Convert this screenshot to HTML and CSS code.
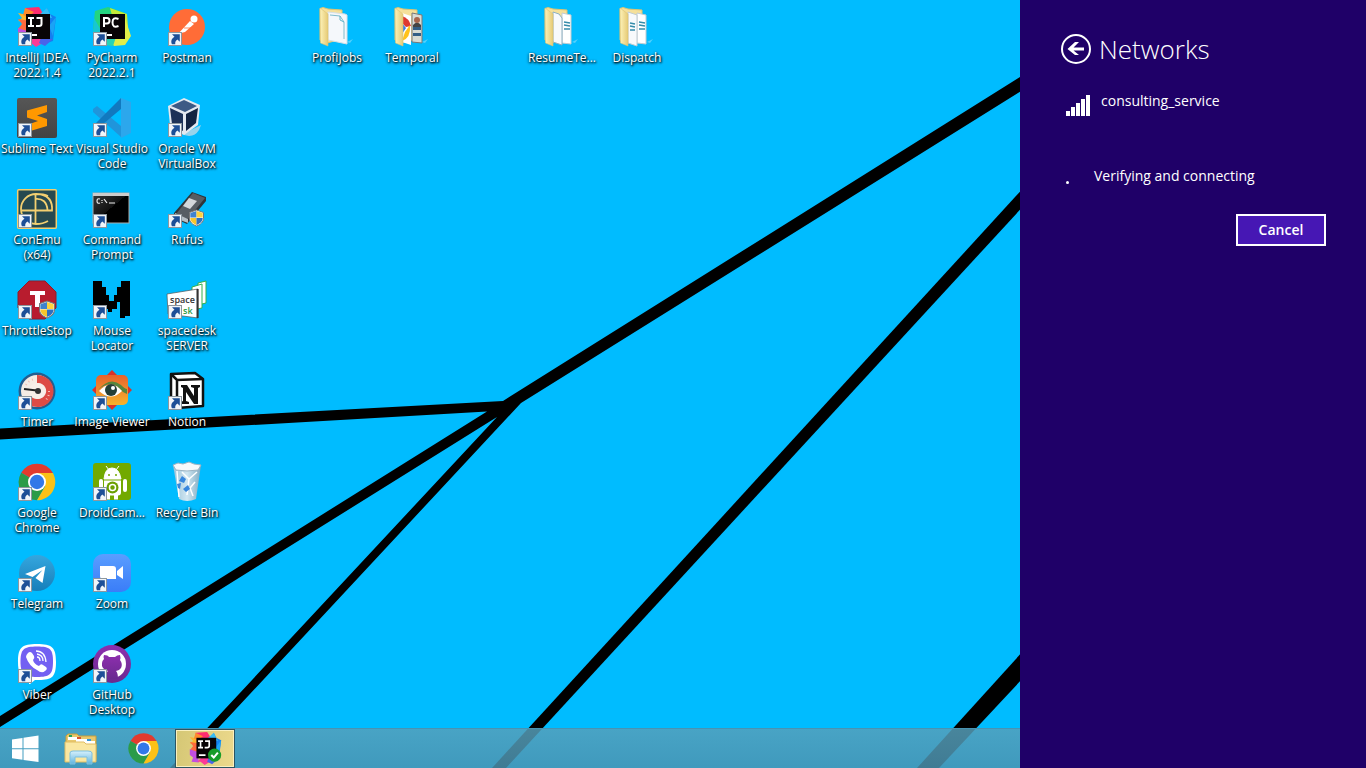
FILE: index.html
```html
<!DOCTYPE html>
<html lang="en">
<head>
<meta charset="utf-8">
<title>Desktop</title>
<link rel="stylesheet" href="styles.css">
</head>
<body>
<svg class="defs" aria-hidden="true">
  <defs>
    <linearGradient id="g-folder" x1="0" x2="1"><stop offset="0" stop-color="#fdf2b8"/><stop offset="1" stop-color="#e6ca75"/></linearGradient>
    <linearGradient id="g-tg" x1="0" y1="0" x2="0" y2="1"><stop offset="0" stop-color="#35a6de"/><stop offset="1" stop-color="#167fba"/></linearGradient>
    <linearGradient id="g-zoom" x1="0" y1="0" x2="0" y2="1"><stop offset="0" stop-color="#5a9dff"/><stop offset="1" stop-color="#3a7df8"/></linearGradient>
    <linearGradient id="g-gh" x1="0" y1="0" x2="0" y2="1"><stop offset="0" stop-color="#8d2fae"/><stop offset="1" stop-color="#6a2a90"/></linearGradient>
    <linearGradient id="g-eye" x1="0" y1="0" x2="0" y2="1"><stop offset="0" stop-color="#e8622c"/><stop offset="1" stop-color="#f6b32c"/></linearGradient>
    <linearGradient id="g-cmd" x1="0" y1="0" x2="1" y2="1"><stop offset="0" stop-color="#3a3a3a"/><stop offset=".5" stop-color="#111"/><stop offset=".5" stop-color="#000"/></linearGradient>
    <linearGradient id="g-sub" x1="0" y1="0" x2="0" y2="1"><stop offset="0" stop-color="#565656"/><stop offset="1" stop-color="#434343"/></linearGradient>
    <linearGradient id="g-bin" x1="0" x2="1"><stop offset="0" stop-color="#a3c3d6"/><stop offset=".5" stop-color="#dce9f1"/><stop offset="1" stop-color="#86a9be"/></linearGradient>
    <linearGradient id="g-stand" x1="0" y1="0" x2="0" y2="1"><stop offset="0" stop-color="#d6f0fc"/><stop offset="1" stop-color="#5fb4de"/></linearGradient>

    <symbol id="shortcut" viewBox="0 0 14 14">
      <rect x=".5" y=".5" width="13" height="13" fill="#f1f5f9" stroke="#8d979f"/>
      <path d="M4 2.200h7.800v7.600l-2.400-2.300C7.600 8.600 7 10 7.300 12.300H4C2.500 9 3.600 6.400 6.500 4.700z" fill="#1d4f97"/>
    </symbol>
    <symbol id="shield" viewBox="0 0 15 17">
      <path d="M7.500.5 14.500 3v6c0 3.500-3 6-7 7.500C3.500 15 .5 12.500.5 9V3z" fill="#fff" stroke="#777"/>
      <path d="M7.500 1.500V8H1.300V3.500z" fill="#3f83cf"/><path d="M7.500 1.500V8h6.200V3.500z" fill="#ffd23c"/>
      <path d="M1.300 8.500h6.200v7C4 14 1.300 12 1.300 8.500z" fill="#f7c52b"/><path d="M13.700 8.500H7.500v7c3.500-1.500 6.200-3.500 6.200-7z" fill="#2e70bf"/>
    </symbol>
    <symbol id="chrome" viewBox="0 0 40 40">
      <path d="M20 20 4.200 10.800A18.300 18.300 0 0 1 35.900 10.800z" fill="#e33b2e"/>
      <path d="M20 20 4.200 10.800A18.300 18.300 0 0 0 20 38.300l8-13.700z" fill="#2b9b48"/>
      <path d="M20 11H35.900A18.300 18.300 0 0 1 20 38.300L28 24.500z" fill="#fbc116"/>
      <circle cx="20" cy="20" r="9" fill="#fff"/><circle cx="20" cy="20" r="7.200" fill="#3278e8"/>
    </symbol>
    <symbol id="idea" viewBox="0 0 40 40">
      <path d="m1 6 9 2 3 8-12-2 4-3z" fill="#fdb52d"/><path d="m1 12 12 2-3 12-9-4 4-5z" fill="#ff6a3c"/>
      <path d="m8 1 14-1 5 8-4 8-14-6z" fill="#ff2d6e"/><path d="m8 1-2 7 5 2 6-5z" fill="#ff8a2b"/>
      <path d="m1 21 9 3 2 13-9-1 2-5-4-3z" fill="#c14fe0"/>
      <path d="m30 1 3 6 6 3-3 24-9 3-3-22z" fill="#147ff0"/><path d="m30 1-9 8 14 2-2-4z" fill="#35bdf5"/><path d="m39 10-7 9 4 10z" fill="#1ba3f5"/>
      <path d="m10 36 6-6h12l-4 7-5 3-5-4z" fill="#fb3b97"/><path d="m24 31 12 1-8 7-6-3z" fill="#4a63ea"/>
      <path d="M9 7h24v25H9z" fill="#080406"/>
      <path d="M11 11h6M14 11v8M11 19h6M19.500 11h5v6q0 2-2.500 2h-3M12 28h8" fill="none" stroke="#fff" stroke-width="2"/>
    </symbol>
    <symbol id="folder-back" viewBox="0 0 40 40">
      <path d="M3 1.500 6 .5l5 1.500 14 1v29L10 36 3 33z" fill="#f5e09a" stroke="#dcc373"/>
    </symbol>
    <symbol id="folder-front" viewBox="0 0 40 40">
      <path d="M3 1 11 7v32l-7.500-3z" fill="url(#g-folder)" stroke="#dcc373" stroke-width=".6"/>
      <path d="m30 35 6-3-3 4z" fill="#b5e8fb" opacity=".45"/>
    </symbol>
  </defs>
</svg>

<svg class="wallpaper" viewBox="0 0 1366 768" preserveAspectRatio="xMidYMid slice" aria-hidden="true">
  <path d="M0 428.500 503 401 1366-140v16L521 403 181 768h-11L497 417 0 727v-11L487 411.500 0 439.500z"/>
  <path d="M492 768 1366-186v20L506 768z"/>
  <path d="M917 768 1366 273v38L939 768z"/>
</svg>

<div class="screen">
  <main class="workspace">
    <div class="desktop">
      <button class="item"><svg class="icon" viewBox="0 0 40 40"><use href="#idea"/><use href="#shortcut" x="1" y="25" width="14" height="14"/></svg><span>IntelliJ IDEA 2022.1.4</span></button>
      <button class="item"><svg class="icon" viewBox="0 0 40 40"><rect x="0" y="0" width="40" height="40" fill="url(#g-sub)" rx="2"/><path d="M10 12.500 30 7v7l-10 3.500L30 21v7L10 34v-7l11-4-11-3.500z" fill="#ff9800"/><use href="#shortcut" x="1" y="25" width="14" height="14"/></svg><span>Sublime Text</span></button>
      <button class="item"><svg class="icon" viewBox="0 0 40 40"><rect x=".7" y=".7" width="38.600" height="38.600" rx="1" fill="#27494f" stroke="#f3cf70" stroke-width="1.500"/><path d="M31 7Q27 5 19 5A15 15 0 0 0 19 35Q26 35 31 32M18.500 5v30M4 21.500H35Q36 8 24 5.500M18.500 10q11-1 12 11" fill="none" stroke="#f3cf70" stroke-width="1.800"/><use href="#shortcut" x="1" y="25" width="14" height="14"/></svg><span>ConEmu (x64)</span></button>
      <button class="item"><svg class="icon" viewBox="0 0 40 40"><path d="M12 1h16l11 11v16L28 39H12L1 28V12z" fill="#b81c2e" stroke="#8f1c2a"/><path d="M13 11h15v4h-5v12h-5V15h-5z" fill="#fff"/><use href="#shortcut" x="1" y="25" width="14" height="14"/><use href="#shield" x="22" y="20" width="16" height="19"/></svg><span>ThrottleStop</span></button>
      <button class="item"><svg class="icon" viewBox="0 0 40 40"><circle cx="20" cy="20" r="18.500" fill="#255d8f"/><circle cx="20" cy="20" r="16" fill="#f5ece5"/><path d="M20 4A16 16 0 1 1 9 31l7-5a8 8 0 1 0 4-14z" fill="#dd4b45"/><path d="M9 14a12 12 0 0 1 9-6M32 20a12 12 0 0 1-3 9" fill="none" stroke="#f3bdb3" stroke-width="2" stroke-dasharray="1 3"/><circle cx="20" cy="20" r="8" fill="#f8efe9"/><path d="m7 18 13 1.500" stroke="#222" stroke-width="1.800"/><circle cx="21" cy="20" r="3" fill="#333"/><use href="#shortcut" x="1" y="25" width="14" height="14"/></svg><span>Timer</span></button>
      <button class="item"><svg class="icon" viewBox="0 0 40 40"><use href="#chrome"/><use href="#shortcut" x="1" y="25" width="14" height="14"/></svg><span>Google Chrome</span></button>
      <button class="item"><svg class="icon" viewBox="0 0 40 40"><circle cx="20" cy="20" r="18" fill="url(#g-tg)"/><path d="m8 21 20.500-8-3 17-7-5 7-8-10 7z" fill="#fff"/><use href="#shortcut" x="1" y="25" width="14" height="14"/></svg><span>Telegram</span></button>
      <button class="item"><svg class="icon" viewBox="0 0 40 40"><path d="M20 0c15 0 19 3 19 18s-4 18-17 18h-4l-5 4-1 0v-6C3 32 1 28 1 18 1 3 5 0 20 0z" fill="#fff"/><path d="M20 2.500c13 0 16 2.500 16 15s-3 15.500-16 15.500S3.500 30 3.500 17.500 7 2.500 20 2.500z" fill="#7360f2"/><path d="M11 9q2-2 4 0l2 3q1 2-1 4 1 4 6 6 2-3 4-1l3 2q2 2-1 4-3 3-8-1-8-4-11-13 0-2 2-4z" fill="#fff"/><path d="M19 7q9 0 10 11M20 10q6 1 6 7M20 13q3 0 3 4" fill="none" stroke="#fff" stroke-width="1.300"/><use href="#shortcut" x="1" y="25" width="14" height="14"/></svg><span>Viber</span></button>

      <button class="item"><svg class="icon" viewBox="0 0 40 40"><path d="m3 4 13-4 17 6v21H8L1 22z" fill="#23d481"/><path d="m18 1 17 6 1 13-12 3z" fill="#c3ea38"/><path d="m33 11 6 18-6 9-11 1-6-8z" fill="#e2ee48"/><path d="m2 11 8 14-4 8-5-6z" fill="#18c7d0"/><path d="m8 31 16-1-3 9-15-2z" fill="#27d3b5"/><path d="M8 7h25v25H8z" fill="#080406"/><path d="M12 20v-9h3q2.500 0 2.500 2.700T15 16.500h-3M26.500 12q-6-2.500-6 3.500t6 3.500M11 28h9" fill="none" stroke="#fff" stroke-width="2"/><use href="#shortcut" x="1" y="25" width="14" height="14"/></svg><span>PyCharm 2022.2.1</span></button>
      <button class="item"><svg class="icon" viewBox="0 0 40 40"><path d="m1 11 4-3 24 20v11L1 14z" fill="#2095db"/><path d="m1 28 28-28v11L5 31l-4-2z" fill="#1179bf"/><path d="m29 0 10 4v31l-10 5z" fill="#2ca7ec"/><use href="#shortcut" x="1" y="25" width="14" height="14"/></svg><span>Visual Studio Code</span></button>
      <button class="item"><svg class="icon" viewBox="0 0 40 40"><rect x="1" y="4" width="36" height="30" fill="url(#g-cmd)" stroke="#aaa"/><path d="M1 5.500h36" stroke="#ccc" stroke-width="3"/><path d="M8 10q-3-1-3 2t3 2M10 11v1M10 13v1M12 10l3 4M17 14h6" stroke="#eee" stroke-width="1.200" fill="none"/><use href="#shortcut" x="1" y="25" width="14" height="14"/></svg><span>Command Prompt</span></button>
      <button class="item"><svg class="icon" viewBox="0 0 40 40"><path d="M1 1h9v6h4v8h3v6h5v-6h3V7h4V1h9v35h-5v2h-5V22h-3v7h-5v3h-4v-3h-3v9H1z" fill="#000"/><use href="#shortcut" x="1" y="25" width="14" height="14"/></svg><span>Mouse Locator</span></button>
      <button class="item"><svg class="icon" viewBox="0 0 40 40"><path d="m20-1 20 20-20 20L0 19z" fill="#d9342b"/><rect x="4" y="4" width="32" height="30" rx="5" fill="url(#g-eye)"/><path d="M6 19Q18 5 29 14q4 4 6 4v5q-4-1-7-5-10-10-22 1z" fill="#56853c"/><path d="M7 20q12-13 23 0-11 11-23 0z" fill="#fff"/><circle cx="19" cy="19" r="6" fill="#243e37"/><circle cx="21" cy="17" r="2" fill="#fff"/><use href="#shortcut" x="1" y="25" width="14" height="14"/></svg><span>Image&nbsp;Viewer</span></button>
      <button class="item"><svg class="icon" viewBox="0 0 40 40"><rect x="1" y="1" width="38" height="37" rx="3" fill="#72a900"/><path d="M12 17q1-11 8-11t9 11zM14 4l3 4M27 4l-3 4" fill="#fff" stroke="#fff"/><path d="M12 18.500h17v12q0 3-3 3v4h-4v-4h-4v4h-4v-4q-2 0-2-3z" fill="#fff"/><path d="M9 19v9M33 19v9" stroke="#fff" stroke-width="4" stroke-linecap="round"/><circle cx="20.500" cy="25.500" r="6" fill="#6aa000"/><circle cx="20.500" cy="25.500" r="3" fill="none" stroke="#fff" stroke-width="1.500"/><circle cx="17" cy="13" r="1" fill="#72a900"/><circle cx="24" cy="13" r="1" fill="#72a900"/><use href="#shortcut" x="1" y="25" width="14" height="14"/></svg><span>DroidCam...</span></button>
      <button class="item"><svg class="icon" viewBox="0 0 40 40"><rect x="1" y="1" width="38" height="38" rx="10" fill="url(#g-zoom)"/><path d="M8 13h13q3 0 3 3v10H11q-3 0-3-3zM25 18l6-5v13l-6-4z" fill="#fff"/><use href="#shortcut" x="1" y="25" width="14" height="14"/></svg><span>Zoom</span></button>
      <button class="item"><svg class="icon" viewBox="0 0 40 40"><circle cx="20" cy="20" r="19" fill="url(#g-gh)"/><circle cx="20" cy="20" r="14" fill="#fff"/><path d="M12 11q4 0 5 2h6q2-2 5-2 1 3 0 5 3 4 1 8-2 3-5 3 2 2 2 8H15v-4q-5 1-6-4 3 3 6 1l1-1q-7-2-6-8 0-2 2-4-1-2 0-4z" fill="url(#g-gh)"/><use href="#shortcut" x="1" y="25" width="14" height="14"/></svg><span>GitHub Desktop</span></button>

      <button class="item"><svg class="icon" viewBox="0 0 40 40"><circle cx="20" cy="20" r="18" fill="#ff6c37"/><circle cx="27" cy="12" r="3.500" fill="#fff"/><path d="m10 28 13-14 4 3-9 8-4 1z" fill="#fff"/><path d="m17 21 8 0M12 25l3 3" stroke="#ff6c37" stroke-width=".8"/><use href="#shortcut" x="1" y="25" width="14" height="14"/></svg><span>Postman</span></button>
      <button class="item"><svg class="icon" viewBox="0 0 40 40"><path d="M12 35q14 7 20-3l2-5-12 6z" fill="#d7dde2" opacity=".7"/><path d="m17 0 16 7-2 20-14 10L3 27 1 8z" fill="#e4e9f0"/><path d="m17 2 13 6-12 6L4 8z" fill="#3d5a85"/><path d="m3 10 13 6v17L5 26z" fill="#1d3157"/><path d="m31 10-12 6v17l10-8z" fill="#132341"/><use href="#shortcut" x="1" y="25" width="14" height="14"/></svg><span>Oracle VM VirtualBox</span></button>
      <button class="item"><svg class="icon" viewBox="0 0 40 40"><path d="M25 3 39 8v4L20 35 7 29v-5z" fill="#303439"/><path d="m26 4 12 5-17 21-12-5z" fill="#575d63"/><path d="m22 9 8 3-7 8-7-3z" fill="#d4d7da"/><path d="m8 24 13 6v4L8 29z" fill="#b6bec4"/><use href="#shortcut" x="1" y="25" width="14" height="14"/><use href="#shield" x="22" y="20" width="15" height="18"/></svg><span>Rufus</span></button>
      <button class="item"><svg class="icon" viewBox="0 0 40 40"><path d="m31 3 8-2v22l-8 2z" fill="#fff" stroke="#35b04a"/><path d="m25 7 10-3v24l-10 2z" fill="#fff" stroke="#35b04a"/><path d="m0 14 31-5v29L1 34z" fill="#fff" stroke="#555" stroke-width=".7"/><path d="M30.500 9v29" stroke="#333" stroke-width="2"/><text x="3" y="23" class="logo-text">space</text><text x="16" y="34" class="logo-text logo-green">sk</text><use href="#shortcut" x="1" y="25" width="14" height="14"/></svg><span>spacedesk SERVER</span></button>
      <button class="item"><svg class="icon" viewBox="0 0 40 40"><path d="M4 3 28 2l8 6v27l-26 2-6-7z" fill="#fff" stroke="#111" stroke-width="2.500" stroke-linejoin="round"/><path d="m4 3 6 6 26-1M10 9v28" fill="none" stroke="#111" stroke-width="2.500"/><path d="M14 14h6l7 11v-8l-3-1v-2h9v2l-2 1v16h-4l-8-12v9l3 1v2h-8v-2l2-1V17l-2-1z" fill="#111"/><use href="#shortcut" x="1" y="25" width="14" height="14"/></svg><span>Notion</span></button>
      <button class="item"><svg class="icon" viewBox="0 0 40 40"><path d="m6 3 28 0-5 34q-9 4-17 0z" fill="url(#g-bin)" opacity=".95"/><path d="m6 3 5-2 5 1 6-2 5 2 7 1-3 5-11 1-11-1z" fill="#f5f9fb" stroke="#9db4c3"/><path d="m10 9 2 26M15 10l7 7 8-7M22 17l-2 16M28 20l-5 6 3 8" stroke="#fff" stroke-width="1.500" fill="none"/><path d="m12 19 3-5 4 3-2 4zM10 22l4-1-1 6-2-1zM16 27l5-4 2 4-4 3z" fill="#3786dd"/></svg><span>Recycle Bin</span></button>

      <button class="item col-5"><svg class="icon" viewBox="0 0 40 40"><use href="#folder-back"/><path d="m11 5 17 2 2 1v29l-19-4z" fill="#f5f8fb" stroke="#d5dfe6"/><path d="m13 8 10 1 4 6v17" fill="none" stroke="#7fbccd"/><path d="M23 9v4l4 2" fill="none" stroke="#5fb4ca"/><use href="#folder-front"/></svg><span>ProfiJobs</span></button>
      <button class="item col-6"><svg class="icon" viewBox="0 0 40 40"><use href="#folder-back"/><path d="m20 6 10 2v28l-10-1z" fill="#d8dbd4" stroke="#777"/><path d="M21 19h8v4h-8zM21 26h8v3h-8z" fill="#335e86"/><path d="M21 18q4-5 8 0v2h-8z" fill="#444"/><circle cx="25" cy="13" r="3" fill="#a8664d"/><path d="M10 6 19 9v29l-9-3z" fill="#fff"/><path d="M10 9q7 2 9 10l-5 1-4-4z" fill="#df3930"/><path d="m18 18q1 13-8 16l3-9z" fill="#ffc21b"/><path d="m10 16 4 5-4 6z" fill="#367be5"/><use href="#folder-front"/></svg><span>Temporal</span></button>
      <button class="item col-8"><svg class="icon" viewBox="0 0 40 40"><use href="#folder-back"/><path d="m20 6 9 2v29l-9-1z" fill="#fff" stroke="#c1ccd2"/><path d="m22 15 6 1M22 18l6 1M22 22h6" stroke="#368caa" stroke-width="1.500"/><path d="M11 5 17 7l3 4v27l-9-3z" fill="#f8fafc" stroke="#8eb0c1"/><use href="#folder-front"/></svg><span>ResumeTe...</span></button>
      <button class="item col-9"><svg class="icon" viewBox="0 0 40 40"><use href="#folder-back"/><path d="m20 6 9 2v29l-9-1z" fill="#fff" stroke="#c1ccd2"/><path d="m22 15 6 1M22 18l6 1M22 22h6" stroke="#368caa" stroke-width="1.500"/><path d="M11 5 20 8v31l-9-3z" fill="#f8fafc" stroke="#c1ccd2"/><path d="m13 16 5 1M13 19l5 1M13 23h5" stroke="#368caa" stroke-width="1.500"/><use href="#folder-front"/></svg><span>Dispatch</span></button>
    </div>

    <nav class="taskbar" aria-label="Taskbar">
      <button class="start" aria-label="Start"><svg width="28" height="28" viewBox="0 0 28 28"><path d="M1 4.500 11.500 3v10.300H1zM12.500 2.800 27.500.5v12.800h-15zM1 14.300h10.500v10.500L1 23.300zM12.500 14.300h15v12.800L12.500 25z" fill="#fff"/></svg></button>
      <button class="task" aria-label="File Explorer"><svg width="34" height="34" viewBox="0 0 34 34"><path d="M2 4 4 2h9l2 2h17v24H2z" fill="#e9c86d" stroke="#c69d3c"/><path d="M4 5h10v3H4z" fill="#fff"/><path d="M5 3h3v2H5z" fill="#21a45d"/><path d="M12 7h12v3H12z" fill="#fff"/><path d="M13 5h4v2h-4z" fill="#d9532c"/><path d="M21 9h10v3H21z" fill="#fff"/><path d="M23 7h4v2h-4z" fill="#3596d6"/><path d="M1 10h19l2 2h10v18H1z" fill="#fae7a1" stroke="#e0bd62"/><path d="M6 32V21q0-2 3-2h15q4 0 4 2v11h-5v-7H11v7z" fill="url(#g-stand)" stroke="#7cbfdf"/></svg></button>
      <button class="task" aria-label="Google Chrome"><svg width="33" height="33" viewBox="0 0 40 40"><use href="#chrome"/></svg></button>
      <button class="task active" aria-label="IntelliJ IDEA"><svg width="33" height="33" viewBox="0 0 40 40"><use href="#idea"/><circle cx="31" cy="28" r="8" fill="#179c28"/><path d="m27 28 3 3 5-6" fill="none" stroke="#fff" stroke-width="2.500"/></svg></button>
    </nav>
  </main>

  <aside class="panel">
    <header class="panel-head">
      <button class="back" aria-label="Back"><svg width="30" height="30" viewBox="0 0 30 30"><circle cx="15" cy="15" r="14" fill="none" stroke="#fff" stroke-width="2"/><path d="M6.500 15 14 8h4l-5.500 5.500H23v3H12.500L18 21h-4z" fill="#fff"/></svg></button>
      <h1>Networks</h1>
    </header>
    <div class="network">
      <svg width="24" height="21" viewBox="0 0 24 21" aria-hidden="true"><path d="M0 16h4v5H0zM5 12h4v9H5zM10 8h4v13h-4zM15 4h4v17h-4zM20 0h4v21h-4z" fill="#fff"/></svg>
      <p>consulting_service</p>
    </div>
    <div class="status" role="status"><i class="dot"></i><p>Verifying and connecting</p></div>
    <button class="cancel">Cancel</button>
  </aside>
</div>
</body>
</html>
```
FILE: styles.css
```css
* { box-sizing: border-box; }

body {
  margin: 0;
  background: #00bcff;
  color: #fff;
  font-family: "Open Sans", "Noto Sans", sans-serif;
  overflow: hidden;
}

h1, p { margin: 0; font-weight: 400; }

button {
  border: 0;
  padding: 0;
  background: none;
  color: inherit;
  font: inherit;
}

.defs { position: absolute; width: 0; height: 0; }

.wallpaper {
  position: absolute;
  inset: 0;
  width: 100%;
  height: 100%;
}

.screen {
  position: relative;
  display: flex;
  height: 100vh;
}

.workspace {
  flex: 1;
  min-width: 0;
  display: flex;
  flex-direction: column;
}

.desktop {
  flex: 1;
  min-height: 0;
  display: grid;
  grid-template-rows: repeat(8, 91px);
  grid-auto-columns: 75px;
  grid-auto-flow: column;
}

.item {
  display: flex;
  flex-direction: column;
  align-items: center;
  justify-content: flex-start;
  padding: 7px 1px 0 0;
  font-size: 12px;
  line-height: 15px;
  text-align: center;
  text-shadow: 1px 1px 2px #000, 0 1px 3px #000;
}

.item span { padding-top: 3px; }

.icon {
  width: 40px;
  height: 40px;
  overflow: visible;
}

.col-5 { grid-area: 1 / 5; }
.col-6 { grid-area: 1 / 6; }
.col-8 { grid-area: 1 / 8; }
.col-9 { grid-area: 1 / 9; }

.logo-text {
  font: 600 9px "Open Sans", sans-serif;
  fill: #333;
  text-shadow: none;
}

.logo-green { fill: #2a9b45; }

.taskbar {
  height: 40px;
  display: flex;
  background: linear-gradient(rgba(86, 159, 186, .84), rgba(76, 147, 176, .84));
  border-top: 1px solid #4893b2;
}

.start,
.task {
  display: flex;
  align-items: center;
  justify-content: center;
}

.start { width: 50px; }
.task { width: 62px; }

.task.active {
  width: 60px;
  margin-left: 1px;
  background: linear-gradient(100deg, #d5c775, #ecd98c);
  border: 1px solid #2b5563;
  box-shadow: inset 0 0 0 1px #faf0c0;
}

.panel {
  width: 346px;
  padding: 33px 40px;
  background: #1f0068;
  font-size: 14px;
  line-height: 20px;
}

.panel-head {
  display: flex;
  align-items: center;
  gap: 8px;
  padding-left: 1px;
}

.back { display: flex; }

.panel-head h1 {
  font-size: 26px;
  font-weight: 300;
  line-height: 32px;
}

.network {
  display: flex;
  gap: 11px;
  padding: 26px 0 0 6px;
}

.network svg { margin-top: 4px; }

.status {
  display: flex;
  align-items: center;
  gap: 25px;
  padding: 50px 0 0 6px;
}

.dot {
  width: 3px;
  height: 3px;
  margin-top: 12px;
  border-radius: 50%;
  background: #fff;
}

.cancel {
  display: block;
  width: 90px;
  height: 32px;
  margin: 28px 0 0 auto;
  border: 2px solid #fff;
  background: #4617b4;
  font-size: 14px;
  font-weight: 600;
}
```
